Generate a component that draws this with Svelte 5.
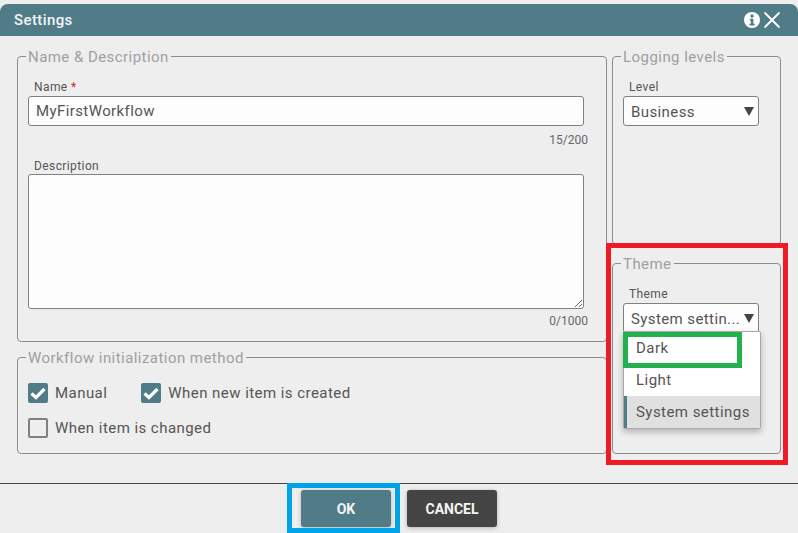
<script>
  let name = $state("MyFirstWorkflow");
  let description = $state("");
  const triggers = [
    { label: "Manual", checked: true },
    { label: "When new item is created", checked: true },
    { label: "When item is changed", checked: false },
  ];
  const themes = ["Dark", "Light", "System settings"];
</script>

<div class="dialog">
  <header class="titlebar">
    <h1>Settings</h1>
    <div class="actions">
      <svg class="info" viewBox="0 0 16 16" width="16" height="16" aria-label="Info">
        <circle cx="8" cy="8" r="8" fill="#fff" />
        <circle cx="8" cy="4" r="1.7" fill="#507c88" />
        <path d="M5.8 6.8h3.6v5h1.2v1.6H5.6v-1.6h1.2V8.4h-1z" fill="#507c88" />
      </svg>
      <svg viewBox="0 0 18 18" width="18" height="18" aria-label="Close">
        <path d="M1.5 1.5l15 15M16.5 1.5l-15 15" stroke="#fff" stroke-width="1.8" fill="none" />
      </svg>
    </div>
  </header>

  <div class="body">
    <div class="left">
      <fieldset class="name-group">
        <legend>Name &amp; Description</legend>
        <div class="field">
          <span class="label">Name <i>*</i></span>
          <input type="text" bind:value={name} />
          <small>15/200</small>
        </div>
        <div class="field desc">
          <span class="label">Description</span>
          <textarea bind:value={description}></textarea>
          <small>0/1000</small>
        </div>
      </fieldset>

      <fieldset class="init-group">
        <legend>Workflow initialization method</legend>
        <div class="checks">
          {#each triggers as t}
            <div class="check">
              <span class="box" class:on={t.checked}>
                {#if t.checked}
                  <svg viewBox="0 0 20 20" width="20" height="20">
                    <path d="M3.5 10.5l4.5 4 8.5-8.5" stroke="#fff" stroke-width="3.2" fill="none" />
                  </svg>
                {/if}
              </span>
              {t.label}
            </div>
          {/each}
        </div>
      </fieldset>
    </div>

    <div class="right">
      <fieldset class="level-group">
        <legend>Logging levels</legend>
        <span class="label">Level</span>
        <div class="select">
          <span>Business</span>
          <svg viewBox="0 0 10 9" width="10" height="9"><path d="M0 0h10L5 9z" fill="#444" /></svg>
        </div>
      </fieldset>

      <fieldset class="theme-group">
        <legend>Theme</legend>
        <span class="label">Theme</span>
        <div class="select-wrap">
          <div class="select">
            <span>System settin...</span>
            <svg viewBox="0 0 10 9" width="10" height="9"><path d="M0 0h10L5 9z" fill="#444" /></svg>
          </div>
          <ul class="menu">
            {#each themes as th, i}
              <li class:selected={i === 2}>{th}</li>
            {/each}
          </ul>
          <div class="mark green"></div>
        </div>
        <div class="mark red"></div>
      </fieldset>
    </div>
  </div>

  <footer class="buttons">
    <div class="ok-wrap">
      <button class="ok" type="button">OK</button>
      <div class="mark blue"></div>
    </div>
    <button class="cancel" type="button">CANCEL</button>
  </footer>
</div>

<style>
  :global(body) {
    background: #eeeeee;
  }

  .dialog {
    width: 798px;
    height: 533px;
    box-sizing: border-box;
    padding-top: 4px;
    background: #eeeeee;
    color: #555;
    font-family: Roboto, "Liberation Sans", sans-serif;
    display: flex;
    flex-direction: column;
    overflow: hidden;
  }

  .titlebar {
    height: 32px;
    flex-shrink: 0;
    background: #507c88;
    border-radius: 8px 8px 0 0;
    display: flex;
    align-items: center;
    justify-content: space-between;
    padding: 0 17px 0 14px;
  }

  h1 {
    margin: 0;
    font-size: 15px;
    font-weight: 500;
    letter-spacing: 0.4px;
    color: #f2f5f6;
  }

  .actions {
    display: flex;
    align-items: center;
    gap: 3px;
  }

  .body {
    flex: 1;
    display: flex;
    gap: 5px;
    padding: 12px 17px 0;
  }

  .left {
    width: 590px;
    display: flex;
    flex-direction: column;
    gap: 7px;
  }

  .right {
    width: 169px;
    display: flex;
    flex-direction: column;
    gap: 10px;
  }

  fieldset {
    margin: 0;
    border: 1px solid #8c8c8c;
    border-radius: 4px;
    box-sizing: border-box;
    min-width: 0;
    padding: 0 10px;
    position: relative;
  }

  legend {
    padding: 2px 2px 0;
    margin-left: -2px;
    font-size: 15px;
    line-height: 15px;
    letter-spacing: 0.45px;
    color: #a0a0a0;
  }

  .name-group {
    height: 294px;
  }

  .init-group {
    height: 105px;
  }

  .level-group {
    height: 197px;
  }

  .theme-group {
    height: 199px;
  }

  .label {
    display: block;
    margin-left: 6px;
    font-size: 12px;
    line-height: 14px;
    letter-spacing: 0.4px;
    color: #555;
  }

  .label i {
    color: #d9262c;
    font-style: normal;
  }

  .name-group .field {
    position: relative;
    margin-top: 15px;
  }

  .name-group .desc {
    margin-top: 12px;
  }

  input,
  textarea {
    display: block;
    box-sizing: border-box;
    width: 556px;
    margin-top: 2px;
    padding: 0 7px;
    background: #fdfdfd;
    border: 1px solid #808080;
    border-radius: 3px;
    font-family: inherit;
    font-size: 15px;
    letter-spacing: 0.4px;
    color: #555;
    outline: none;
  }

  input {
    height: 30px;
  }

  textarea {
    height: 135px;
    margin-top: 1px;
    resize: vertical;
  }

  small {
    display: block;
    width: 560px;
    margin-top: 7px;
    font-size: 12px;
    line-height: 14px;
    text-align: right;
    color: #666;
  }

  .desc small {
    margin-top: 5px;
  }

  .checks {
    display: flex;
    flex-wrap: wrap;
    gap: 15px 34px;
    margin-top: 17px;
  }

  .check {
    display: flex;
    align-items: center;
    gap: 7px;
    font-size: 15px;
    line-height: 20px;
    letter-spacing: 0.45px;
    color: #555;
  }

  .check:last-child {
    flex-basis: 100%;
  }

  .box {
    width: 20px;
    height: 20px;
    box-sizing: border-box;
    border: 2px solid #808080;
    border-radius: 2px;
    flex-shrink: 0;
  }

  .box.on {
    background: #507c88;
    border: none;
  }

  .box svg {
    display: block;
  }

  .level-group .label,
  .theme-group .label {
    margin-top: 15px;
  }

  .select {
    width: 136px;
    height: 30px;
    box-sizing: border-box;
    margin-top: 2px;
    padding: 1px 4px 0 7px;
    background: #fdfdfd;
    border: 1px solid #808080;
    border-radius: 3px;
    display: flex;
    align-items: center;
    justify-content: space-between;
    font-size: 15px;
    letter-spacing: 0.4px;
    color: #555;
  }

  .select span {
    white-space: nowrap;
  }

  .select-wrap {
    position: relative;
  }

  .menu {
    position: absolute;
    top: 28px;
    left: 0;
    width: 138px;
    box-sizing: border-box;
    margin: 0;
    padding: 0;
    list-style: none;
    background: #fff;
    border: 1px solid #a8a8a8;
    border-radius: 2px;
    box-shadow: 0 3px 6px rgba(0, 0, 0, 0.25);
  }

  .menu li {
    height: 32px;
    padding-left: 12px;
    display: flex;
    align-items: center;
    font-size: 15px;
    letter-spacing: 0.45px;
    color: #555;
  }

  .menu li.selected {
    background: #e0e0e0;
    border-left: 3px solid #507c88;
    padding-left: 9px;
  }

  .buttons {
    height: 50px;
    flex-shrink: 0;
    box-sizing: border-box;
    border-top: 1px solid #444;
    padding: 6px 0 0 301px;
    display: flex;
    align-items: flex-start;
    gap: 16px;
  }

  .ok-wrap {
    position: relative;
  }

  button {
    display: block;
    width: 90px;
    height: 37px;
    border: none;
    border-radius: 3px;
    font-family: inherit;
    font-size: 14px;
    font-weight: 700;
    color: #f4f4f4;
    box-shadow: 0 1px 4px rgba(0, 0, 0, 0.25);
  }

  .ok {
    background: #507c88;
  }

  .cancel {
    background: #444444;
  }

  /* annotations drawn over the screenshot */
  .mark {
    position: absolute;
    box-sizing: border-box;
    border-style: solid;
    border-width: 5px;
    pointer-events: none;
  }

  .red {
    left: -7px;
    top: -29px;
    width: 182px;
    height: 222px;
    border-color: #ed1c24;
  }

  .green {
    left: 0;
    top: 29px;
    width: 119px;
    height: 36px;
    border-color: #22b14c;
  }

  .blue {
    left: -14px;
    top: -7px;
    width: 113px;
    height: 50px;
    border-color: #00a2e8;
  }
</style>
